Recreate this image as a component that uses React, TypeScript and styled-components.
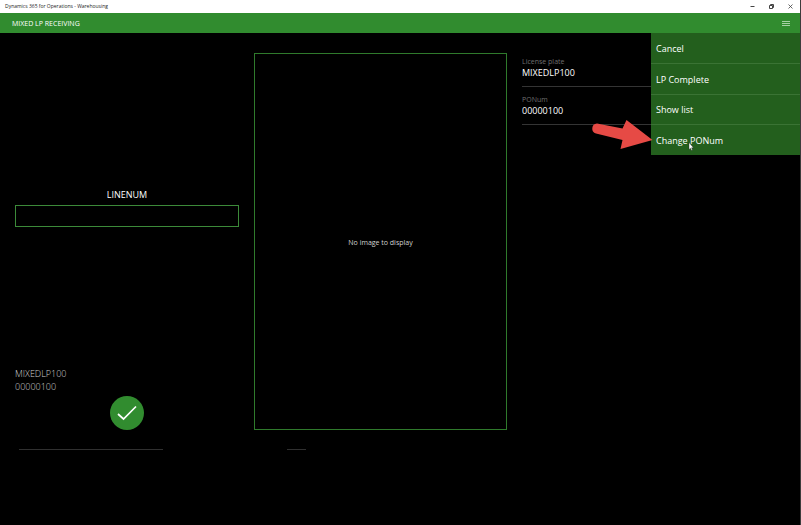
import React, { useState } from "react";
import styled, { createGlobalStyle } from "styled-components";

const GlobalStyle = createGlobalStyle`
  * { box-sizing: border-box; }
  html, body { margin: 0; background: #000; }
  body, button, input { font-family: "Open Sans", "Noto Sans", sans-serif; }
`;

const AppWindow = styled.div`
  position: relative;
  display: flex;
  flex-direction: column;
  min-height: 100vh;
  background: #000;
  border-right: 1px solid #3c3c3c;
  color: #fff;
  overflow: hidden;
`;

const TitleBar = styled.header`
  display: flex;
  align-items: center;
  justify-content: space-between;
  height: 13px;
  padding: 0 6px 0 5px;
  background: #fff;
  color: #222;
  font-size: 5px;
  line-height: 13px;
`;

const WindowControls = styled.div`
  display: flex;
  gap: 12px;
`;

const WindowButton = styled.button`
  display: flex;
  width: 7px;
  height: 7px;
  padding: 0;
  border: 0;
  background: none;
  color: #444;
`;

const AppBar = styled.div`
  position: relative;
  display: flex;
  align-items: center;
  justify-content: space-between;
  height: 20px;
  padding: 0 10px 0 12px;
  background: #318c2f;
`;

const PageTitle = styled.h1`
  margin: 0;
  padding-top: 2px;
  font-size: 7px;
  font-weight: 400;
  line-height: 18px;
`;

const MenuButton = styled.button`
  display: flex;
  padding: 1px 0 0;
  border: 0;
  background: none;
  color: #c4e2c3;
`;

const Menu = styled.nav`
  position: absolute;
  top: 100%;
  right: 0;
  z-index: 1;
  display: flex;
  flex-direction: column;
  width: 149px;
  height: 122px;
  background: #235f1d;
`;

const MenuItem = styled.button`
  flex: 1;
  padding: 2px 5px 0;
  border: 0;
  border-bottom: 1px solid #3a7334;
  background: none;
  color: #fff;
  font-size: 9px;
  line-height: 16px;
  text-align: left;

  &:last-child { border-bottom: 0; }
`;

const Content = styled.main`
  display: grid;
  grid-template-columns: 224fr 253fr 263fr;
  gap: 15px;
  flex: 1;
  padding: 20px 15px 0;
  grid-template-rows: 1fr;
`;

const EntryForm = styled.form`
  display: flex;
  flex-direction: column;
  justify-content: flex-end;
`;

const FieldLabel = styled.label`
  margin-bottom: 3px;
  font-size: 9px;
  line-height: 14px;
  text-align: center;
`;

const FieldInput = styled.input`
  width: 100%;
  height: 22px;
  margin-bottom: 140px;
  padding: 0 6px;
  border: 1px solid #3c8a39;
  border-radius: 0;
  outline: 0;
  background: #000;
  color: #fff;
  font-size: 9px;
`;

const SummaryLine = styled.div`
  color: #d0d0d0;
  font-size: 9px;
  font-weight: 300;
  line-height: 13px;
`;

const ConfirmButton = styled.button`
  display: flex;
  align-items: center;
  justify-content: center;
  align-self: center;
  width: 34px;
  height: 34px;
  margin-top: 3px;
  padding: 0;
  border: 0;
  border-radius: 50%;
  background: #318c2f;
  color: #fff;
`;

const ImagePanel = styled.section`
  display: flex;
  align-items: center;
  justify-content: center;
  padding-top: 2px;
  border: 1px solid #2f7a2c;
  color: #d2d2d2;
  font-size: 7px;
`;

const Details = styled.dl`
  margin: 0;
`;

const Detail = styled.div`
  height: 38px;
  padding-top: 8px;
  border-bottom: 1px solid #343434;

  &:first-child {
    height: 34px;
    padding-top: 4px;
  }
`;

const DetailName = styled.dt`
  color: #6e6e6e;
  font-size: 7px;
  line-height: 10px;
`;

const DetailValue = styled.dd`
  margin: 0;
  font-size: 9px;
  line-height: 12px;
`;

const Footer = styled.footer`
  display: flex;
  gap: 124px;
  height: 95px;
  padding: 19px;
`;

const Rule = styled.hr<{ $width: number }>`
  width: ${(p) => p.$width}px;
  height: 1px;
  margin: 0;
  border: 0;
  background: #303030;
`;

const Pointer = styled.svg`
  position: absolute;
  top: 119px;
  right: 147px;
  z-index: 2;
  pointer-events: none;
`;

const Cursor = styled.svg`
  position: absolute;
  top: 142px;
  right: 106px;
  z-index: 2;
  pointer-events: none;
`;

const actions = ["Cancel", "LP Complete", "Show list", "Change PONum"];

const details = [
  { name: "License plate", value: "MIXEDLP100" },
  { name: "PONum", value: "00000100" },
];

export default function App() {
  const [menuOpen, setMenuOpen] = useState(true);

  return (
    <AppWindow>
      <GlobalStyle />
      <TitleBar>
        <span>Dynamics 365 for Operations - Warehousing</span>
        <WindowControls>
          <WindowButton aria-label="Minimize">
            <svg width="7" height="7" viewBox="0 0 7 7" stroke="currentColor">
              <path d="M1.5 3.5h4" />
            </svg>
          </WindowButton>
          <WindowButton aria-label="Restore">
            <svg width="7" height="7" viewBox="0 0 7 7" fill="none" stroke="currentColor">
              <path d="M1.500 2.500h3v3h-3zM2.500 2.500v-1h3v3h-1" />
            </svg>
          </WindowButton>
          <WindowButton aria-label="Close">
            <svg width="7" height="7" viewBox="0 0 7 7" stroke="currentColor" strokeWidth="0.8">
              <path d="M1.500 1.500l4 4M5.500 1.500l-4 4" />
            </svg>
          </WindowButton>
        </WindowControls>
      </TitleBar>
      <AppBar>
        <PageTitle>MIXED LP RECEIVING</PageTitle>
        <MenuButton
          aria-label="Menu"
          aria-expanded={menuOpen}
          onClick={() => setMenuOpen((open) => !open)}
        >
          <svg width="8" height="5" viewBox="0 0 8 5" stroke="currentColor" strokeWidth="0.8">
            <path d="M0 0.500h8M0 2.500h8M0 4.500h8" />
          </svg>
        </MenuButton>
        {menuOpen && (
          <Menu>
            {actions.map((action) => (
              <MenuItem key={action}>{action}</MenuItem>
            ))}
          </Menu>
        )}
      </AppBar>
      <Content>
        <EntryForm onSubmit={(e) => e.preventDefault()}>
          <FieldLabel htmlFor="linenum">LINENUM</FieldLabel>
          <FieldInput id="linenum" />
          <SummaryLine>MIXEDLP100</SummaryLine>
          <SummaryLine>00000100</SummaryLine>
          <ConfirmButton type="submit" aria-label="Confirm">
            <svg width="20" height="16" viewBox="0 0 20 16" fill="none" stroke="currentColor" strokeWidth="1.700">
              <path d="M1 9l5.500 5L19 1.500" />
            </svg>
          </ConfirmButton>
        </EntryForm>
        <ImagePanel>No image to display</ImagePanel>
        <Details>
          {details.map((detail) => (
            <Detail key={detail.name}>
              <DetailName>{detail.name}</DetailName>
              <DetailValue>{detail.value}</DetailValue>
            </Detail>
          ))}
        </Details>
      </Content>
      <Footer>
        <Rule $width={144} />
        <Rule $width={19} />
      </Footer>
      <Pointer width="62" height="31" viewBox="0 0 62 31" fill="#e64a45" aria-hidden="true">
        <path d="M6 4.500L31.500 9.500L35.500 1L61.500 21L29.500 30L31.500 21L5 14.500A5.100 5.100 0 0 1 6 4.500Z" />
      </Pointer>
      <Cursor width="6" height="9" viewBox="0 0 6 9" fill="#fff" stroke="#222" strokeWidth="0.4" aria-hidden="true">
        <path d="M1 0.500V7.500L2.500 6.200L3.500 8.500L4.500 8L3.600 5.800H5.500Z" />
      </Cursor>
    </AppWindow>
  );
}
